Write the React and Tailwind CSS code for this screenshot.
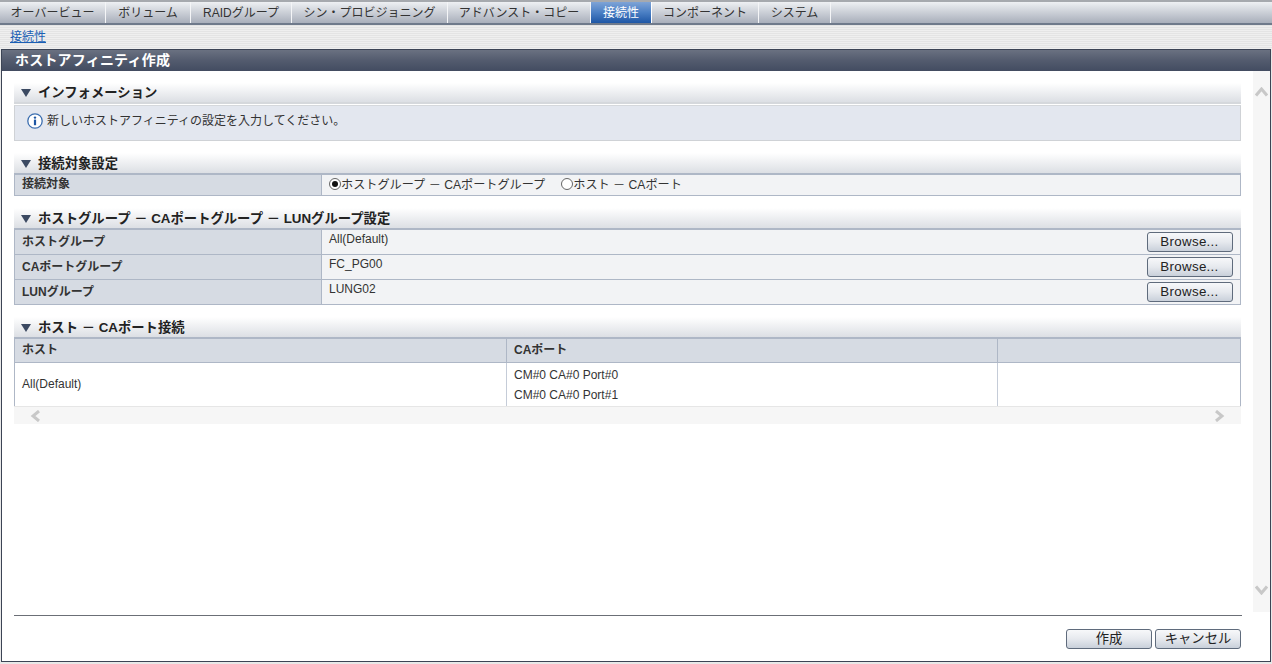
const tabs = [
  ["オーバービュー", "w-[106px]"],
  ["ボリューム", "w-[85px]"],
  ["RAIDグループ", "w-[101px]"],
  ["シン・プロビジョニング", "w-[156px]"],
  ["アドバンスト・コピー", "w-[143px]"],
  ["接続性", "w-[61px]", true],
  ["コンポーネント", "w-[107px]"],
  ["システム", "w-[72px]"],
];

function Tri() {
  return (
    <svg width="10" height="8" viewBox="0 0 10 8" className="shrink-0">
      <polygon points="0,0 10,0 5,8" fill="#3c4a62" />
    </svg>
  );
}

function SectionHead({ children, cls = "h-[22px]", border = "border-[#aeb7c6]" }) {
  return (
    <div className={`${cls} flex items-center gap-[7px] pl-[7px] pt-px bg-gradient-to-b from-white to-[#dcdfe4] border-b-2 ${border} text-[13.33px] font-bold text-[#222] leading-none`}>
      <Tri />
      <span>{children}</span>
    </div>
  );
}

function Btn({ children, cls }) {
  return (
    <button className={`h-[20px] rounded-[3px] border border-[#5f6b7c] bg-gradient-to-b from-[#f7f8fa] via-[#e6e9ee] to-[#c9d0da] text-[13.33px] text-[#222] leading-none pb-px ${cls}`}>
      {children}
    </button>
  );
}

function Row({ label, value, last }) {
  return (
    <div className={`flex ${last ? "h-[24px]" : "h-[25px] border-b border-[#aeb7c6]"}`}>
      <div className="w-[307px] bg-[#d6dbe3] border-r border-[#aeb7c6] pl-[7px] pb-px flex items-center font-bold text-[#333]">{label}</div>
      <div className="flex-1 bg-[#f2f3f5] pl-[7px] pr-[7px] flex justify-between">
        <span>{value}</span>
        <Btn cls="w-[86px] mt-[2px] pr-px tracking-[0.3px]">Browse...</Btn>
      </div>
    </div>
  );
}

function Radio({ on }) {
  return (
    <span className="w-[12px] h-[12px] rounded-full border border-[#666] bg-white flex items-center justify-center shrink-0 mb-[3px]">
      {on && <span className="w-[6px] h-[6px] rounded-full bg-[#111]" />}
    </span>
  );
}

export default function App() {
  return (
    <div className="w-[1272px] h-[664px] overflow-hidden flex flex-col bg-[#e8e8e8] text-[12px] text-[#333] font-['Liberation_Sans','Noto_Sans_CJK_JP',sans-serif]">
      <div className="h-[25px] shrink-0 flex bg-gradient-to-b from-[#eef0f3] to-[#a9afbb] border-t-2 border-[#a6a9ae] border-b-2 border-b-[#6f7a8b]">
        {tabs.map(([t, w, active]) => (
          <div
            key={t}
            className={`${w} shrink-0 h-full flex items-center justify-center text-[12px] leading-none border-r whitespace-nowrap ${
              active
                ? "bg-gradient-to-b from-[#7ea3d6] via-[#4a7fc4] to-[#1d56a5] text-white border-white"
                : "text-[#333] border-[#f4f5f7]"
            }`}
          >
            {t}
          </div>
        ))}
      </div>

      <div className="h-[24px] shrink-0 pl-[10px] flex items-center bg-[repeating-linear-gradient(to_bottom,#e4e4e4_0px,#e4e4e4_1px,#efefef_1px,#efefef_2px)]">
        <a className="text-[#1a5fb4] underline text-[12px] leading-none">接続性</a>
      </div>

      <div className="ml-px mr-px mb-[2px] flex-1 min-h-0 flex flex-col border border-[#3c4455] bg-white">
        <div className="h-[21px] shrink-0 pl-[13px] pb-px flex items-center text-white font-bold text-[14px] tracking-[0.2px] leading-none bg-gradient-to-b from-[#6a7181] via-[#535b6e] to-[#434c61]">
          ホストアフィニティ作成
        </div>

        <div className="flex-1 min-h-0 flex">
          <div className="w-[1251px] shrink-0 pl-[12px] pr-[12px] pt-[12px]">
            <SectionHead cls="h-[21px]" border="border-[#d5d8dc]">インフォメーション</SectionHead>
            <div className="h-[36px] mt-px bg-[#e3e7ef] border border-[#cfd2d6] border-t-[#d5d8dc] flex items-center pl-[12px] gap-[4px] pb-[4px]">
              <svg width="16" height="16" viewBox="0 0 16 16" className="shrink-0">
                <circle cx="8" cy="8" r="7.2" fill="#fff" stroke="#3d6fb0" strokeWidth="1.3" />
                <circle cx="8" cy="4.6" r="1.2" fill="#1f57a4" />
                <rect x="6.9" y="6.6" width="2.2" height="5.6" fill="#1f57a4" />
              </svg>
              <span className="text-[12px] text-[#333]">新しいホストアフィニティの設定を入力してください。</span>
            </div>

            <div className="mt-[12px]">
              <SectionHead>接続対象設定</SectionHead>
              <div className="flex h-[21px] border border-t-0 border-[#aeb7c6]">
                <div className="w-[307px] bg-[#d6dbe3] border-r border-[#aeb7c6] pl-[7px] flex items-center font-bold pb-[2px]">接続対象</div>
                <div className="flex-1 bg-[#f2f3f5] pl-[7px] flex items-center">
                  <Radio on />
                  <span className="text-[12.15px]">ホストグループ － CAポートグループ</span>
                  <span className="w-[16px]" />
                  <Radio />
                  <span className="text-[12.15px]">ホスト － CAポート</span>
                </div>
              </div>
            </div>

            <div className="mt-[12px]">
              <SectionHead>ホストグループ － CAポートグループ － LUNグループ設定</SectionHead>
              <div className="border border-t-0 border-[#aeb7c6]">
                <Row label="ホストグループ" value="All(Default)" />
                <Row label="CAポートグループ" value="FC_PG00" />
                <Row label="LUNグループ" value="LUNG02" last />
              </div>
            </div>

            <div className="mt-[12px]">
              <SectionHead>ホスト － CAポート接続</SectionHead>
              <div className="border-x border-[#aeb7c6]">
                <div className="flex h-[24px] bg-[#d6dbe3] border-b border-[#aeb7c6] font-bold">
                  <div className="w-[492px] pl-[7px] pb-px flex items-center border-r border-[#aeb7c6]">ホスト</div>
                  <div className="w-[491px] pl-[7px] pb-px flex items-center border-r border-[#aeb7c6]">CAポート</div>
                  <div className="flex-1" />
                </div>
                <div className="flex h-[43px] bg-white">
                  <div className="w-[492px] pl-[7px] pb-px flex items-center border-r border-[#c5ccd8]">All(Default)</div>
                  <div className="w-[491px] pl-[7px] pt-[2px] flex flex-col border-r border-[#c5ccd8] leading-[20px]">
                    <span>CM#0 CA#0 Port#0</span>
                    <span>CM#0 CA#0 Port#1</span>
                  </div>
                  <div className="flex-1" />
                </div>
              </div>
              <div className="h-[18px] bg-[#f6f6f6] border-t border-[#e6e6e6] flex items-center justify-between px-[16px]">
                <svg width="11" height="12" viewBox="0 0 11 12"><polyline points="9,1 3,6 9,11" fill="none" stroke="#c8c8c8" strokeWidth="3" /></svg>
                <svg width="11" height="12" viewBox="0 0 11 12"><polyline points="2,1 8,6 2,11" fill="none" stroke="#c8c8c8" strokeWidth="3" /></svg>
              </div>
            </div>
          </div>

          <div className="w-[17px] h-[541px] bg-[#f6f6f6] flex flex-col items-center justify-between pt-[16px] pb-[17px]">
            <svg width="13" height="10" viewBox="0 0 13 10"><polyline points="1,8.5 6.5,2 12,8.5" fill="none" stroke="#c8c8c8" strokeWidth="3" /></svg>
            <svg width="13" height="10" viewBox="0 0 13 10"><polyline points="1,1.5 6.5,8 12,1.5" fill="none" stroke="#c8c8c8" strokeWidth="3" /></svg>
          </div>
        </div>

        <div className="shrink-0 h-[49px] pl-[12px] pr-[28px]">
          <div className="border-t border-[#6b6f76] mt-[3px] flex justify-end gap-[3px] pt-[13px] pr-px">
            <Btn cls="w-[86px]">作成</Btn>
            <Btn cls="w-[86px]">キャンセル</Btn>
          </div>
        </div>
      </div>
    </div>
  );
}
